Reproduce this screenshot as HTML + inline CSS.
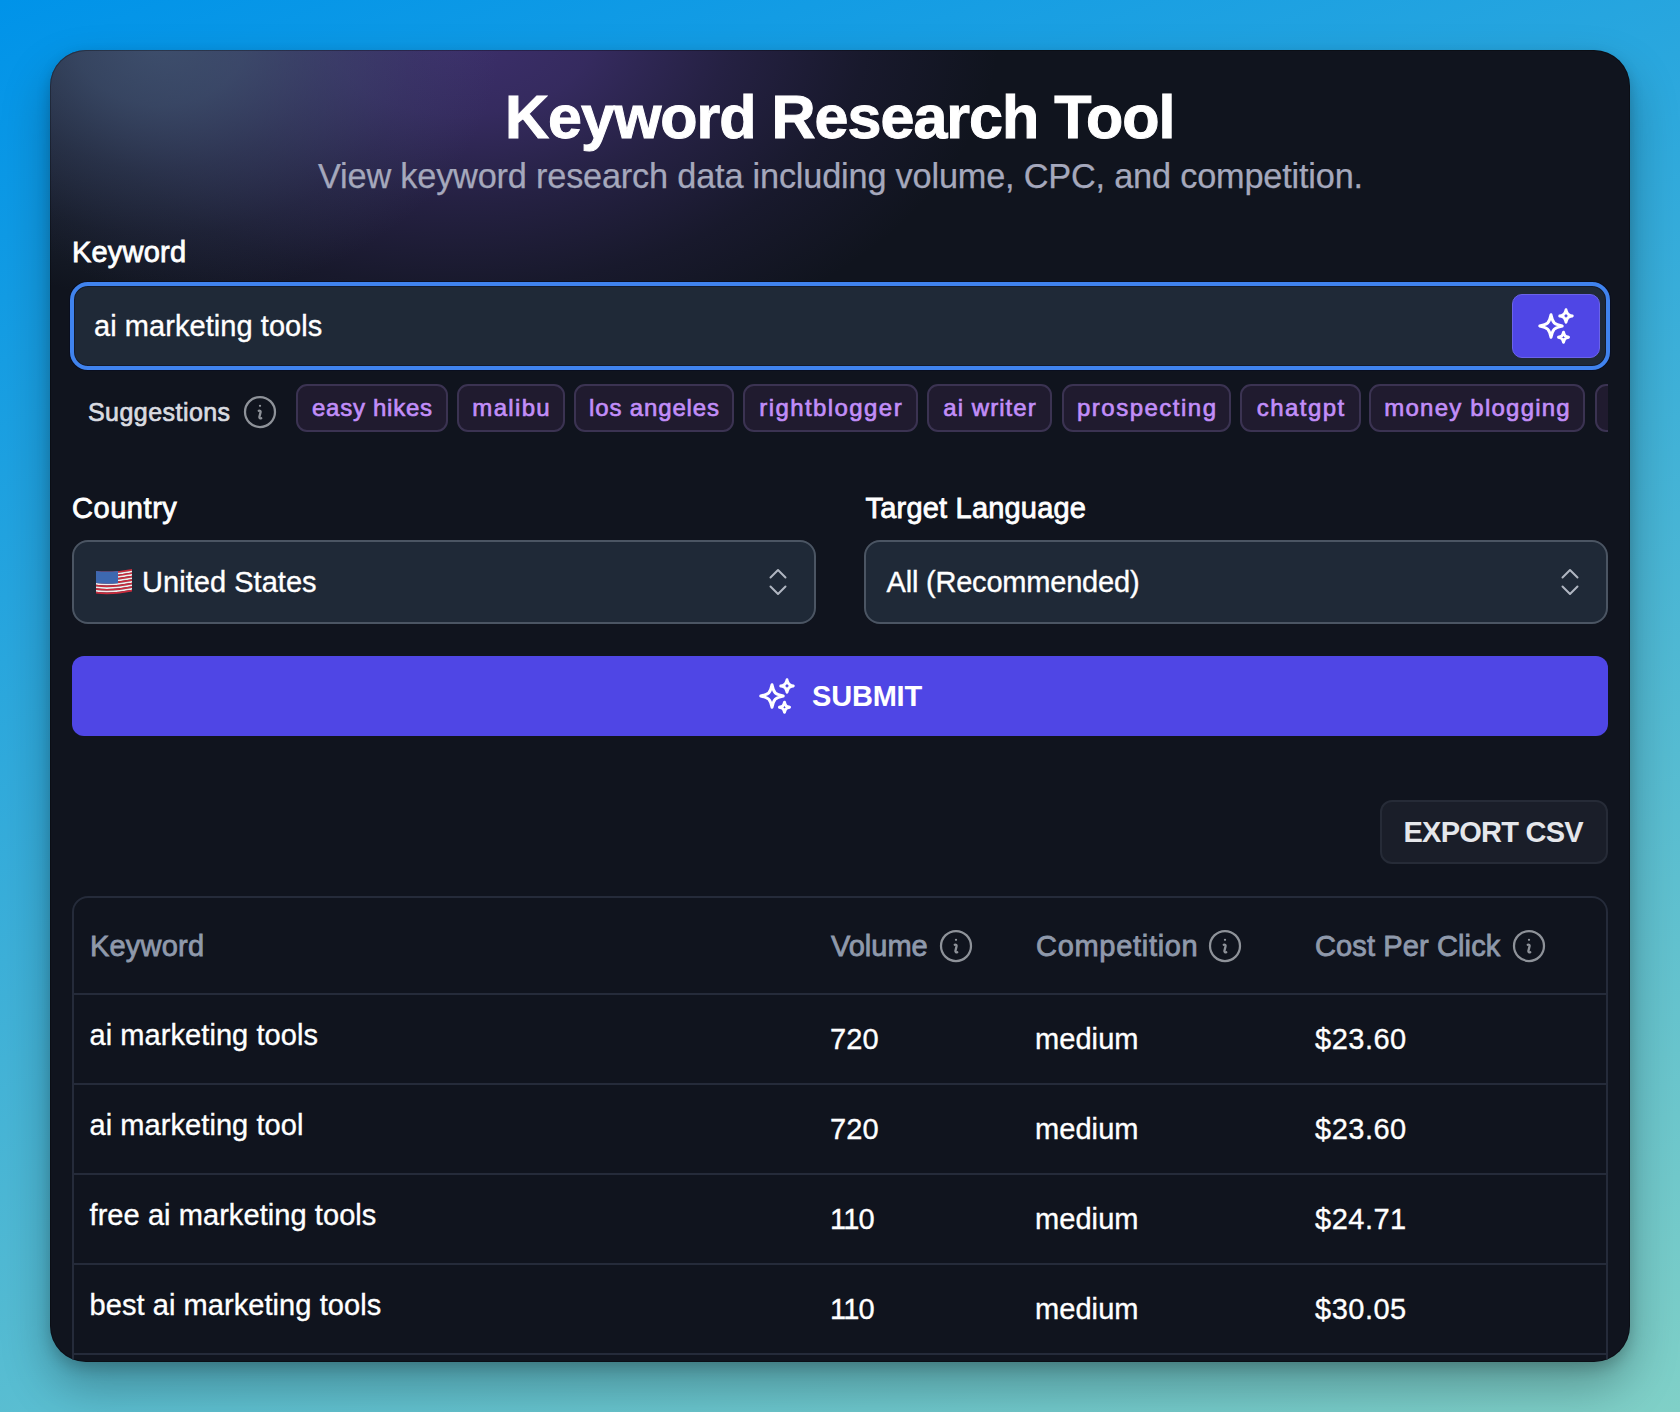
<!DOCTYPE html>
<html>
<head>
<meta charset="utf-8">
<style>
html,body{margin:0;padding:0;width:1680px;height:1412px;overflow:hidden}
body{background:#0093E9;background-image:linear-gradient(160deg,#0093E9 0%,#80D0C7 100%);font-family:"Liberation Sans",sans-serif;position:relative}
.card{position:absolute;left:50px;top:50px;width:1580px;height:1312px;border-radius:36px;background:#10141e;overflow:hidden;box-shadow:0 24px 48px rgba(0,0,0,0.28),0 6px 14px rgba(0,0,0,0.18)}
.glow{position:absolute;left:0;top:0;width:1580px;height:700px;
 background:radial-gradient(ellipse 340px 260px at 110px -10px, rgba(68,90,120,0.800) 0%, rgba(68,90,120,0.664) 25%, rgba(68,90,120,0.376) 50%, rgba(68,90,120,0.144) 75%, rgba(68,90,120,0.000) 100%),
  radial-gradient(ellipse 540px 340px at 410px -20px, rgba(88,64,156,0.620) 0%, rgba(88,64,156,0.515) 25%, rgba(88,64,156,0.291) 50%, rgba(88,64,156,0.112) 75%, rgba(88,64,156,0.000) 100%);
}
.t{position:absolute;white-space:nowrap;line-height:1}
.content{position:absolute;left:0;top:0;width:1680px;height:1412px;clip-path:inset(50px 50px 50px 50px round 36px)}
.abs{position:absolute;box-sizing:border-box}
.chip{position:absolute;top:0;height:48px;box-sizing:border-box;border:2px solid #3b3352;border-radius:11px;background:#201b2f;color:#c28ef9;font-size:24px;font-weight:400;-webkit-text-stroke:0.65px #c28ef9;line-height:44px;text-align:center;white-space:nowrap}
.th{font-size:29px;font-weight:400;color:#8f99ab;-webkit-text-stroke:0.8px #8f99ab}
.td{font-size:29px;font-weight:400;color:#fff;letter-spacing:0.07px;-webkit-text-stroke:0.35px #fff}
</style>
</head>
<body>
<div class="card">
  <div class="glow"></div><div style="position:absolute;left:0;top:0;right:0;bottom:0;border-radius:36px;box-shadow:inset 0 0 0 1px rgba(0,0,0,0.28)"></div>
</div>

<div class="content">
<!-- Title -->
<div class="t" style="left:505px;top:87.4px;font-size:61px;font-weight:700;color:#fff;letter-spacing:-1px;-webkit-text-stroke:1px #fff">Keyword Research Tool</div>
<div class="t" style="left:318px;top:159px;font-size:34.3px;font-weight:400;color:#a5a8bc;letter-spacing:-0.19px;-webkit-text-stroke:0.25px #a5a8bc">View keyword research data including volume, CPC, and competition.</div>

<!-- Keyword label -->
<div class="t" style="left:72px;top:237.6px;font-size:29px;font-weight:400;color:#fff;letter-spacing:0.2px;-webkit-text-stroke:0.8px #fff">Keyword</div>

<!-- Input -->
<div class="abs" style="left:70px;top:282px;width:1540px;height:88px;border:4px solid #4083ee;border-radius:18px;background:#1f2937;box-shadow:0 0 0 1px rgba(4,10,32,0.55), inset 0 0 0 1px rgba(4,10,32,0.45)"></div>
<div class="t" style="left:94px;top:311.6px;font-size:29px;color:#fff;letter-spacing:0.06px;-webkit-text-stroke:0.35px #fff">ai marketing tools</div>
<div class="abs" style="left:1512px;top:294px;width:88px;height:64px;border-radius:10px;background:#4f46e5;border:1px solid #6b63ea"></div>
<svg class="abs" style="left:1536px;top:306px" width="40" height="40" viewBox="0 0 24 24" fill="none" stroke="#fff" stroke-width="1.75" stroke-linecap="round" stroke-linejoin="round"><path d="M9.813 15.904 9 18.75l-.813-2.846a4.5 4.5 0 0 0-3.09-3.09L2.25 12l2.846-.813a4.5 4.5 0 0 0 3.09-3.09L9 5.25l.813 2.846a4.5 4.5 0 0 0 3.09 3.09L15.75 12l-2.846.813a4.5 4.5 0 0 0-3.09 3.09ZM18.259 8.715 18 9.75l-.259-1.035a3.375 3.375 0 0 0-2.455-2.456L14.25 6l1.036-.259a3.375 3.375 0 0 0 2.455-2.456L18 2.25l.259 1.035a3.375 3.375 0 0 0 2.456 2.456L21.75 6l-1.035.259a3.375 3.375 0 0 0-2.456 2.456ZM16.894 20.567 16.5 21.75l-.394-1.183a2.25 2.25 0 0 0-1.423-1.423L13.5 18.75l1.183-.394a2.25 2.25 0 0 0 1.423-1.423l.394-1.183.394 1.183a2.25 2.25 0 0 0 1.423 1.423l1.183.394-1.183.394a2.25 2.25 0 0 0-1.423 1.423Z"/></svg>


<!-- Suggestions -->
<div class="t" style="left:88px;top:400px;font-size:25px;font-weight:400;color:#d9dbe0;letter-spacing:0.45px;-webkit-text-stroke:0.7px #d9dbe0">Suggestions</div>
<svg class="abs" style="left:240px;top:392px" width="40" height="40" viewBox="0 0 24 24" fill="none" stroke="#8e9299" stroke-width="1.35" stroke-linecap="round" stroke-linejoin="round"><path d="m11.25 11.25.041-.02a.75.75 0 0 1 1.063.852l-.708 2.836a.75.75 0 0 0 1.063.853l.041-.021M21 12a9 9 0 1 1-18 0 9 9 0 0 1 18 0Zm-9-3.75h.008v.008H12V8.25Z"/></svg>
<div class="abs" style="left:296px;top:384px;width:1312px;height:48px;overflow:hidden">
  <div class="chip" style="left:0px;width:152px;letter-spacing:0.73px;padding-left:0.73px">easy hikes</div>
  <div class="chip" style="left:161px;width:108px;letter-spacing:1.33px;padding-left:1.33px">malibu</div>
  <div class="chip" style="left:278px;width:160px;letter-spacing:0.86px;padding-left:0.86px">los angeles</div>
  <div class="chip" style="left:447px;width:175px;letter-spacing:1.41px;padding-left:1.41px">rightblogger</div>
  <div class="chip" style="left:631px;width:125px;letter-spacing:1.04px;padding-left:1.04px">ai writer</div>
  <div class="chip" style="left:766px;width:169px;letter-spacing:1.5px;padding-left:1.5px">prospecting</div>
  <div class="chip" style="left:944px;width:121px;letter-spacing:1.47px;padding-left:1.47px">chatgpt</div>
  <div class="chip" style="left:1073px;width:216px;letter-spacing:1.23px;padding-left:1.23px">money blogging</div>
  <div class="chip" style="left:1299px;width:150px;letter-spacing:1.0px;padding-left:1.0px">seo tools</div>
</div>

<!-- Country -->
<div class="t" style="left:72px;top:494px;font-size:29px;font-weight:400;color:#fff;letter-spacing:0.55px;-webkit-text-stroke:0.8px #fff">Country</div>
<div class="abs" style="left:72px;top:540px;width:744px;height:84px;border:2px solid #4b5563;border-radius:16px;background:#1f2937"></div>
<svg class="abs" style="left:96px;top:568px" width="37" height="28" viewBox="0 0 37 28">
  <defs><clipPath id="cant"><rect x="0" y="0" width="22" height="28"/></clipPath></defs>
  <path d="M0,2.90 C12,4.50 24,3.10 36,0.90 L36,2.66 C24,4.86 12,6.26 0,4.66 Z" fill="#cc2b3d"/><path d="M0,4.64 C12,6.24 24,4.84 36,2.64 L36,4.40 C24,6.60 12,8.00 0,6.40 Z" fill="#f3eded"/><path d="M0,6.38 C12,7.98 24,6.58 36,4.38 L36,6.14 C24,8.34 12,9.74 0,8.14 Z" fill="#cc2b3d"/><path d="M0,8.12 C12,9.72 24,8.32 36,6.12 L36,7.87 C24,10.07 12,11.47 0,9.87 Z" fill="#f3eded"/><path d="M0,9.85 C12,11.45 24,10.05 36,7.85 L36,9.61 C24,11.81 12,13.21 0,11.61 Z" fill="#cc2b3d"/><path d="M0,11.59 C12,13.19 24,11.79 36,9.59 L36,11.35 C24,13.55 12,14.95 0,13.35 Z" fill="#f3eded"/><path d="M0,13.33 C12,14.93 24,13.53 36,11.33 L36,13.09 C24,15.29 12,16.69 0,15.09 Z" fill="#cc2b3d"/><path d="M0,15.07 C12,16.67 24,15.27 36,13.07 L36,14.83 C24,17.03 12,18.43 0,16.83 Z" fill="#f3eded"/><path d="M0,16.81 C12,18.41 24,17.01 36,14.81 L36,16.57 C24,18.77 12,20.17 0,18.57 Z" fill="#cc2b3d"/><path d="M0,18.55 C12,20.15 24,18.75 36,16.55 L36,18.30 C24,20.50 12,21.90 0,20.30 Z" fill="#f3eded"/><path d="M0,20.28 C12,21.88 24,20.48 36,18.28 L36,20.04 C24,22.24 12,23.64 0,22.04 Z" fill="#cc2b3d"/><path d="M0,22.02 C12,23.62 24,22.22 36,20.02 L36,21.78 C24,23.98 12,25.38 0,23.78 Z" fill="#f3eded"/><path d="M0,23.76 C12,25.36 24,23.96 36,21.76 L36,23.52 C24,25.72 12,27.12 0,25.52 Z" fill="#cc2b3d"/>
  <path d="M0,2.90 C12,4.50 24,3.10 36,0.90 L36,13.07 C24,15.27 12,16.67 0,15.07 Z" fill="#3d68b0" clip-path="url(#cant)"/>
</svg>
<div class="t" style="left:142px;top:568px;font-size:29px;color:#fff;letter-spacing:0.04px;-webkit-text-stroke:0.35px #fff">United States</div>
<svg class="abs" style="left:766px;top:566px" width="24" height="32" viewBox="0 0 24 32" fill="none" stroke="#b0b6c1" stroke-width="2" stroke-linecap="round" stroke-linejoin="round"><path d="M4.5 11.5 L12 4 L19.5 11.5 M4.5 20.5 L12 28 L19.5 20.5"/></svg>

<!-- Target Language -->
<div class="t" style="left:865.5px;top:494px;font-size:29px;font-weight:400;color:#fff;letter-spacing:0.2px;-webkit-text-stroke:0.8px #fff">Target Language</div>
<div class="abs" style="left:864px;top:540px;width:744px;height:84px;border:2px solid #4b5563;border-radius:16px;background:#1f2937"></div>
<div class="t" style="left:886.5px;top:568px;font-size:29px;color:#fff;letter-spacing:-0.2px;-webkit-text-stroke:0.35px #fff">All (Recommended)</div>
<svg class="abs" style="left:1558px;top:566px" width="24" height="32" viewBox="0 0 24 32" fill="none" stroke="#b0b6c1" stroke-width="2" stroke-linecap="round" stroke-linejoin="round"><path d="M4.5 11.5 L12 4 L19.5 11.5 M4.5 20.5 L12 28 L19.5 20.5"/></svg>

<!-- Submit -->
<div class="abs" style="left:72px;top:656px;width:1536px;height:80px;border-radius:12px;background:#4f46e5"></div>
<svg class="abs" style="left:757px;top:676px" width="40" height="40" viewBox="0 0 24 24" fill="none" stroke="#fff" stroke-width="1.75" stroke-linecap="round" stroke-linejoin="round"><path d="M9.813 15.904 9 18.75l-.813-2.846a4.5 4.5 0 0 0-3.090-3.090L2.25 12l2.846-.813a4.5 4.5 0 0 0 3.090-3.090L9 5.25l.813 2.846a4.5 4.5 0 0 0 3.090 3.090L15.75 12l-2.846.813a4.5 4.5 0 0 0-3.090 3.090ZM18.259 8.715 18 9.75l-.259-1.035a3.375 3.375 0 0 0-2.455-2.456L14.25 6l1.036-.259a3.375 3.375 0 0 0 2.455-2.456L18 2.25l.259 1.035a3.375 3.375 0 0 0 2.456 2.456L21.75 6l-1.035.259a3.375 3.375 0 0 0-2.456 2.456ZM16.894 20.567 16.5 21.75l-.394-1.183a2.25 2.25 0 0 0-1.423-1.423L13.5 18.75l1.183-.394a2.25 2.25 0 0 0 1.423-1.423l.394-1.183.394 1.183a2.25 2.250 0 0 0 1.423 1.423l1.183.394-1.183.394a2.25 2.25 0 0 0-1.423 1.423Z"/></svg>
<div class="t" style="left:812px;top:682.4px;font-size:29px;font-weight:700;color:#fff;letter-spacing:-0.2px">SUBMIT</div>

<!-- Export CSV -->
<div class="abs" style="left:1380px;top:800px;width:228px;height:64px;border-radius:12px;background:#1a1e29;border:2px solid #262b37"></div>
<div class="t" style="left:1403.5px;top:818.4px;font-size:29px;font-weight:700;color:#e5e7eb;letter-spacing:-0.75px">EXPORT CSV</div>

<!-- Table -->
<div class="abs" style="left:72px;top:896px;width:1536px;height:600px;border:2px solid #252b3a;border-radius:16px"></div>
<div class="abs" style="left:74px;top:993px;width:1532px;height:2px;background:#252b3a"></div>
<div class="abs" style="left:74px;top:1083px;width:1532px;height:2px;background:#252b3a"></div>
<div class="abs" style="left:74px;top:1173px;width:1532px;height:2px;background:#252b3a"></div>
<div class="abs" style="left:74px;top:1263px;width:1532px;height:2px;background:#252b3a"></div>
<div class="abs" style="left:74px;top:1353px;width:1532px;height:2px;background:#252b3a"></div>

<div class="t th" style="left:90px;top:932.4px;letter-spacing:0.2px">Keyword</div>
<div class="t th" style="left:831px;top:932.4px;letter-spacing:0px">Volume</div>
<svg class="abs" style="left:936px;top:926px" width="40" height="40" viewBox="0 0 24 24" fill="none" stroke="#8e9299" stroke-width="1.35" stroke-linecap="round" stroke-linejoin="round"><path d="m11.25 11.25.041-.02a.75.75 0 0 1 1.063.852l-.708 2.836a.75.75 0 0 0 1.063.853l.041-.021M21 12a9 9 0 1 1-18 0 9 9 0 0 1 18 0Zm-9-3.75h.008v.008H12V8.25Z"/></svg>
<div class="t th" style="left:1036px;top:932.4px;letter-spacing:0.7px">Competition</div>
<svg class="abs" style="left:1205px;top:926px" width="40" height="40" viewBox="0 0 24 24" fill="none" stroke="#8e9299" stroke-width="1.35" stroke-linecap="round" stroke-linejoin="round"><path d="m11.25 11.25.041-.02a.75.75 0 0 1 1.063.852l-.708 2.836a.75.75 0 0 0 1.063.853l.041-.021M21 12a9 9 0 1 1-18 0 9 9 0 0 1 18 0Zm-9-3.75h.008v.008H12V8.25Z"/></svg>
<div class="t th" style="left:1315px;top:932.4px;letter-spacing:0.12px">Cost Per Click</div>
<svg class="abs" style="left:1509px;top:926px" width="40" height="40" viewBox="0 0 24 24" fill="none" stroke="#8e9299" stroke-width="1.35" stroke-linecap="round" stroke-linejoin="round"><path d="m11.25 11.25.041-.02a.75.75 0 0 1 1.063.852l-.708 2.836a.75.75 0 0 0 1.063.853l.041-.021M21 12a9 9 0 1 1-18 0 9 9 0 0 1 18 0Zm-9-3.75h.008v.008H12V8.25Z"/></svg>

<div class="t td" style="left:89.5px;top:1021.4px">ai marketing tools</div>
<div class="t td" style="left:830px;top:1025.0px">720</div>
<div class="t td" style="left:1035px;top:1025.0px">medium</div>
<div class="t td" style="left:1315px;top:1025.0px;letter-spacing:0.5px">$23.60</div>

<div class="t td" style="left:89.5px;top:1111.4px">ai marketing tool</div>
<div class="t td" style="left:830px;top:1115.0px">720</div>
<div class="t td" style="left:1035px;top:1115.0px">medium</div>
<div class="t td" style="left:1315px;top:1115.0px;letter-spacing:0.5px">$23.60</div>

<div class="t td" style="left:89.5px;top:1201.4px">free ai marketing tools</div>
<div class="t td" style="left:830px;top:1205.0px;letter-spacing:-0.8px">110</div>
<div class="t td" style="left:1035px;top:1205.0px">medium</div>
<div class="t td" style="left:1315px;top:1205.0px;letter-spacing:0.5px">$24.71</div>

<div class="t td" style="left:89.5px;top:1291.4px">best ai marketing tools</div>
<div class="t td" style="left:830px;top:1295.0px;letter-spacing:-0.8px">110</div>
<div class="t td" style="left:1035px;top:1295.0px">medium</div>
<div class="t td" style="left:1315px;top:1295.0px;letter-spacing:0.5px">$30.05</div>

</div>
</body>
</html>
